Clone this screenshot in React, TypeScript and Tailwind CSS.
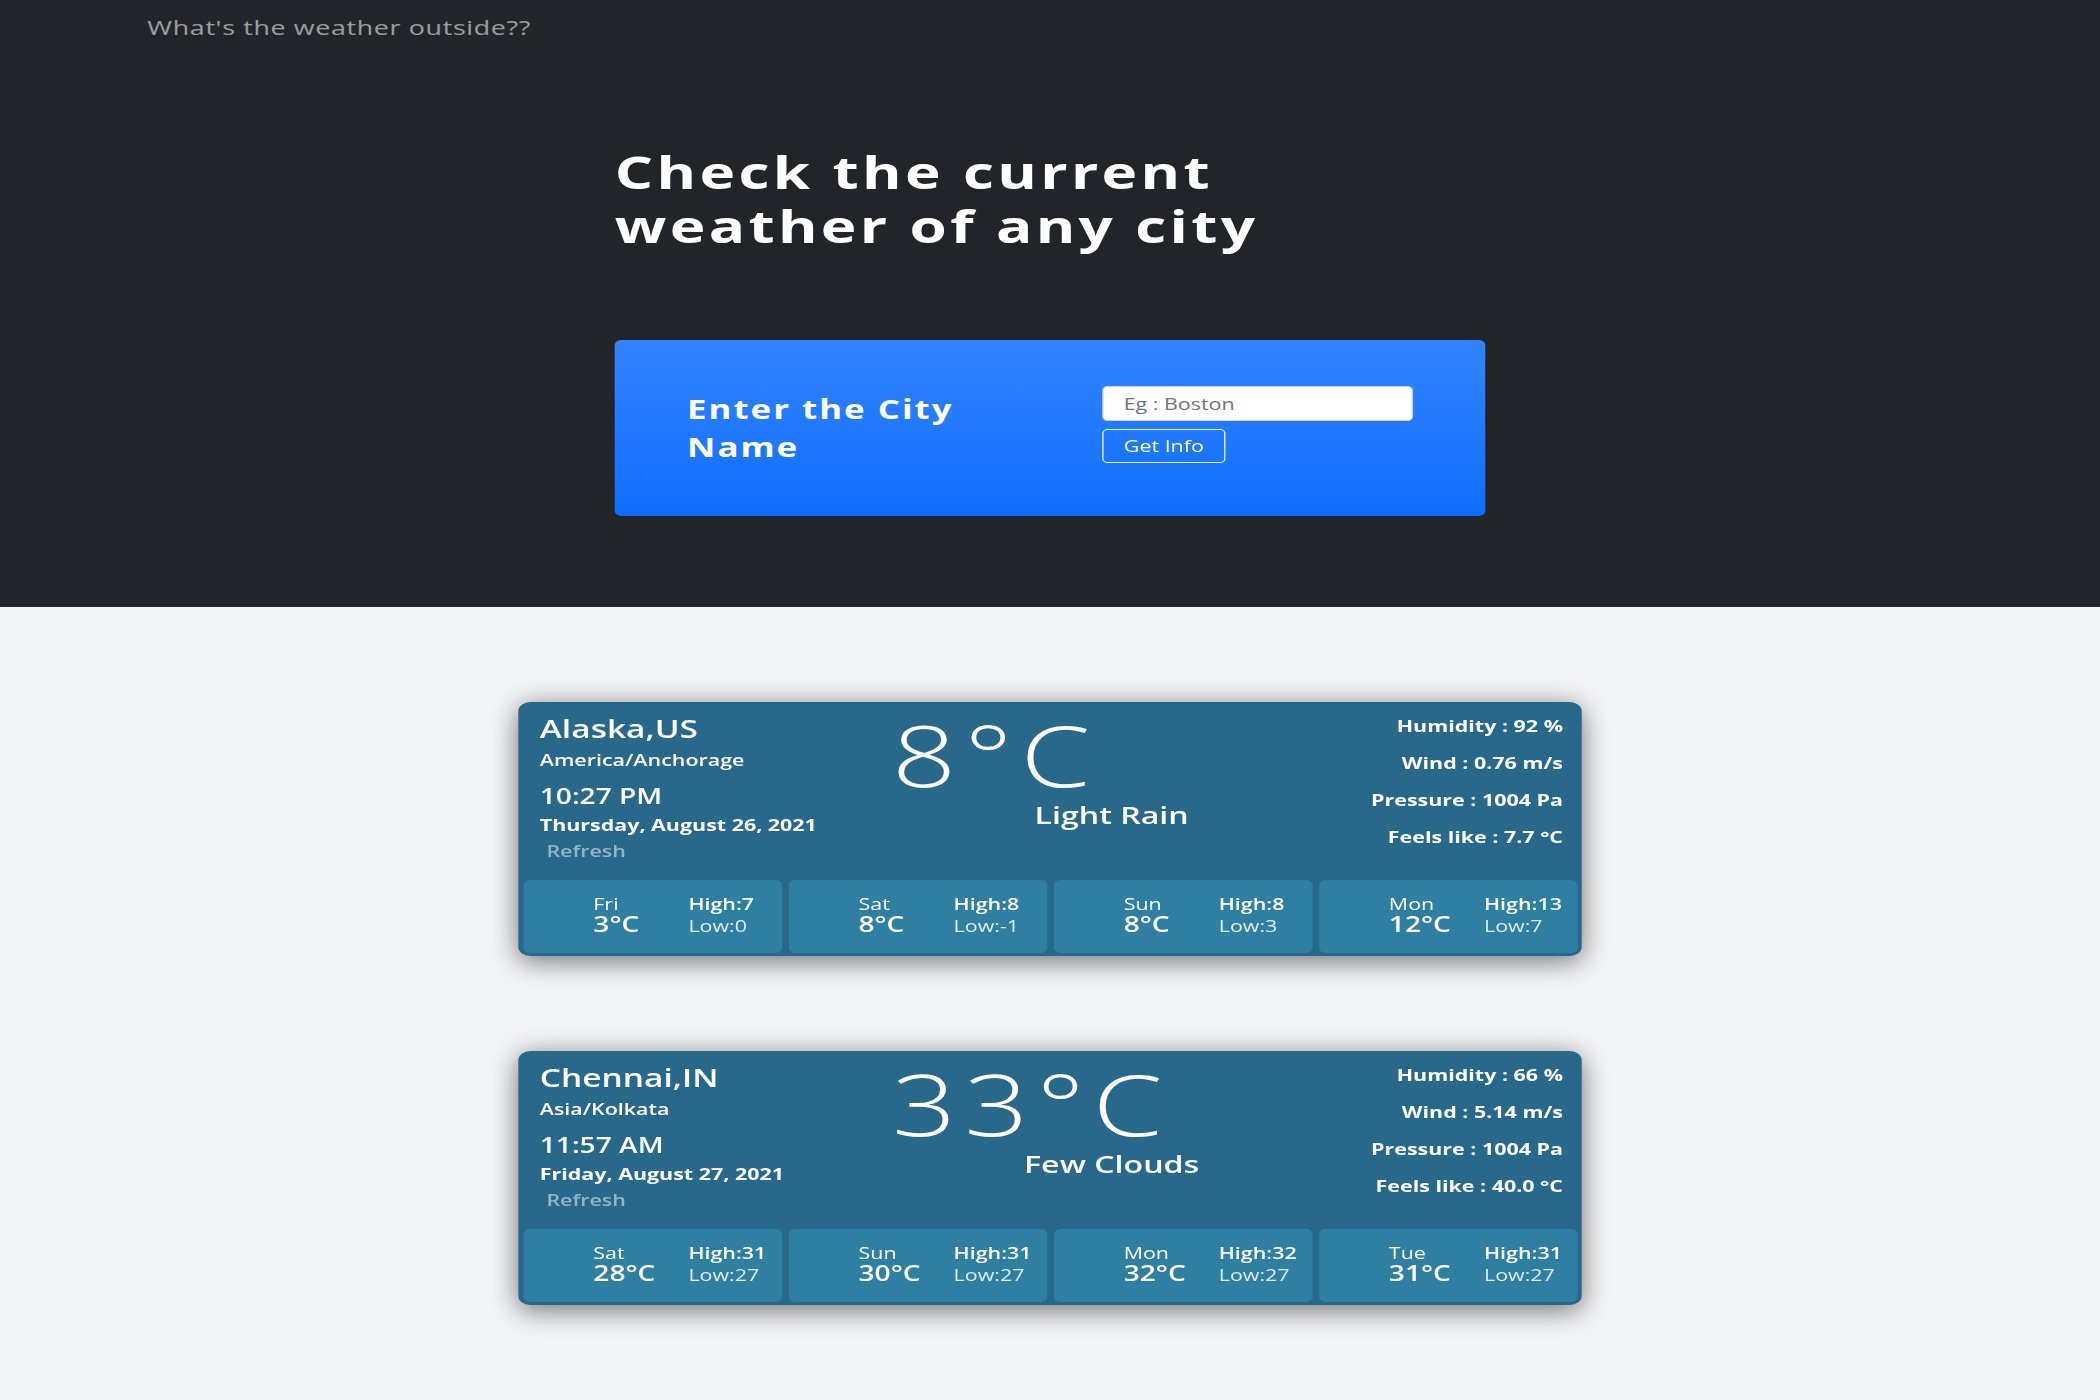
type Forecast = { day: string; temp: string; high: number; low: number };

type CityWeather = {
  name: string;
  zone: string;
  time: string;
  date: string;
  temp: string;
  desc: string;
  humidity: string;
  wind: string;
  pressure: string;
  feels: string;
  days: Forecast[];
};

const cities: CityWeather[] = [
  {
    name: 'Alaska,US',
    zone: 'America/Anchorage',
    time: '10:27 PM',
    date: 'Thursday, August 26, 2021',
    temp: '8°C',
    desc: 'Light Rain',
    humidity: '92 %',
    wind: '0.76 m/s',
    pressure: '1004 Pa',
    feels: '7.7 °C',
    days: [
      { day: 'Fri', temp: '3°C', high: 7, low: 0 },
      { day: 'Sat', temp: '8°C', high: 8, low: -1 },
      { day: 'Sun', temp: '8°C', high: 8, low: 3 },
      { day: 'Mon', temp: '12°C', high: 13, low: 7 },
    ],
  },
  {
    name: 'Chennai,IN',
    zone: 'Asia/Kolkata',
    time: '11:57 AM',
    date: 'Friday, August 27, 2021',
    temp: '33°C',
    desc: 'Few Clouds',
    humidity: '66 %',
    wind: '5.14 m/s',
    pressure: '1004 Pa',
    feels: '40.0 °C',
    days: [
      { day: 'Sat', temp: '28°C', high: 31, low: 27 },
      { day: 'Sun', temp: '30°C', high: 31, low: 27 },
      { day: 'Mon', temp: '32°C', high: 32, low: 27 },
      { day: 'Tue', temp: '31°C', high: 31, low: 27 },
    ],
  },
];

function WeatherCard({ city }: { city: CityWeather }) {
  return (
    <div className="w-[794px] mx-auto rounded-[9px] bg-[#28688b] shadow-[0_5px_24px_rgba(0,0,0,0.55)] pt-[3px] pl-[4px] pr-[3px] pb-[3px] text-white">
      <div className="h-[175px] flex">
        <div className="w-[260px] pl-[12px] pt-[8px]">
          <div className="text-[25px] leading-[30px] font-semibold">{city.name}</div>
          <div className="text-[16px] leading-[35px] font-semibold">{city.zone}</div>
          <div className="text-[21px] leading-[37px] font-semibold">{city.time}</div>
          <div className="text-[16px] leading-[21px] font-bold">{city.date}</div>
          <button className="pl-[5px] text-[16px] leading-[31px] font-semibold text-white/50">Refresh</button>
        </div>
        <div className="w-[358px] pt-[5px]">
          <div className="pl-[15px] text-[84px] leading-[90px] font-light tracking-[6px]">{city.temp}</div>
          <div className="text-center text-[24px] leading-[30px] font-semibold">{city.desc}</div>
        </div>
        <div className="flex-1 pr-[11px] pt-[3px] text-right text-[16px] leading-[37px] font-bold">
          <div>Humidity : {city.humidity}</div>
          <div>Wind : {city.wind}</div>
          <div>Pressure : {city.pressure}</div>
          <div>Feels like : {city.feels}</div>
        </div>
      </div>
      <div className="h-[73px] flex gap-[5px]">
        {city.days.map((d) => (
          <div key={d.day} className="flex-1 flex rounded-[5px] bg-[#2e7fa2] pl-[52px] pt-[14px]">
            <div className="w-[71px]">
              <div className="text-[16px] leading-[20px] font-medium">{d.day}</div>
              <div className="text-[21px] leading-[21px] font-semibold">{d.temp}</div>
            </div>
            <div>
              <div className="text-[16px] leading-[20px] font-semibold">High:{d.high}</div>
              <div className="text-[16px] leading-[24px] text-white/85">Low:{d.low}</div>
            </div>
          </div>
        ))}
      </div>
    </div>
  );
}

export default function App() {
  return (
    <div className="h-[1400px] w-full overflow-hidden bg-[#f4f5f7] font-['Open_Sans',sans-serif]">
      <div className="w-[1568px] origin-top-left scale-x-[1.3393]">
        <section className="h-[607px] bg-[#212529]">
          <nav className="h-[56px] flex items-center pl-[110px]">
            <span className="text-[20px] tracking-[0.5px] text-white/55">What's the weather outside??</span>
          </nav>
          <div className="w-[650px] mx-auto">
            <h1 className="mt-[89px] text-[45px] leading-[54px] font-bold tracking-[2.5px] text-white">
              Check the current
              <br />
              weather of any city
            </h1>
            <div className="mt-[87px] h-[176px] rounded-[5px] bg-linear-to-b from-[#3184fd] to-[#0d6efd] flex items-center pl-[54px]">
              <h3 className="w-[310px] pr-[70px] text-[26px] leading-[38px] font-bold tracking-[1.5px] text-white">
                Enter the City Name
              </h3>
              <form className="mb-[7px] flex flex-col items-start gap-2" onSubmit={(e) => e.preventDefault()}>
                <input
                  type="text"
                  placeholder="Eg : Boston"
                  className="w-[232px] h-[35px] rounded-[4px] border border-[#ced4da] bg-white px-[15px] text-[16px] text-[#212529] placeholder:text-[#6c757d] outline-none"
                />
                <button
                  type="submit"
                  className="w-[92px] h-[34px] rounded-[4px] border border-white/90 text-[16px] text-white"
                >
                  Get Info
                </button>
              </form>
            </div>
          </div>
        </section>
        <section className="pt-[95px] flex flex-col gap-[95px]">
          {cities.map((c) => (
            <WeatherCard key={c.name} city={c} />
          ))}
        </section>
      </div>
    </div>
  );
}
